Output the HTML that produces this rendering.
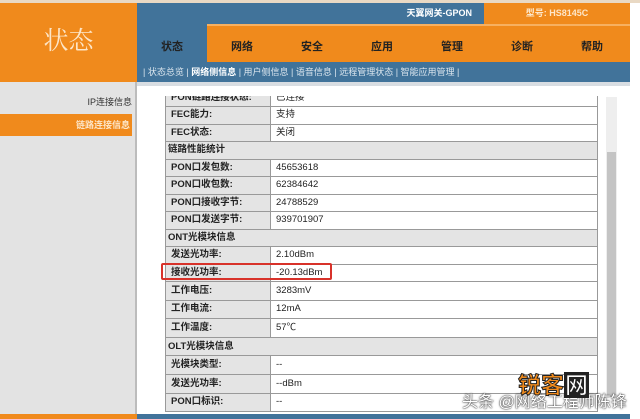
<!DOCTYPE html><html><head><meta charset="utf-8"><style>
body{margin:0;width:640px;height:419px;overflow:hidden;background:#fff;position:relative;font-family:"Liberation Sans","Noto Sans CJK SC",sans-serif;}
div{position:absolute;box-sizing:border-box}
.t{font-size:11px;font-weight:bold;color:#222;text-align:center;width:70px;top:38px}
table{border-collapse:collapse;font-size:9.5px;}
td{border:1px solid #999;height:17.5px;padding:0 0 0 5px;box-sizing:border-box;color:#222;line-height:10px}
tr.b td{height:18.6px}
td.k{background:#e4e4e4;font-weight:bold;width:105px}
td.s{background:#e4e4e4;font-weight:bold;padding-left:2px}
</style></head><body>
<div style="left:0;top:0;width:640px;height:3px;background:#e9d9c4"></div>
<div style="left:0;top:3px;width:137px;height:79px;background:#f08a1c;color:#fde6c8;font-size:25px;text-align:center;line-height:72px;font-family:'Noto Serif CJK SC',serif">状态</div>
<div style="left:137px;top:3px;width:347px;height:21px;background:#41739a;color:#fff;font-size:9px;font-weight:bold;text-align:right;padding-right:12px;line-height:21px">天翼网关-GPON</div>
<div style="left:484px;top:3px;width:146px;height:21px;background:#f08a1c;color:#fde6c8;font-size:9px;font-weight:bold;text-align:center;line-height:21px">型号: HS8145C</div>
<div style="left:137px;top:24px;width:493px;height:38px;background:#f08a1c;border-top:2px solid #f7b060"></div>
<div style="left:137px;top:24px;width:70px;height:38px;background:#41739a"></div>
<div class="t" style="left:137px">状态</div><div class="t" style="left:207px">网络</div><div class="t" style="left:277px">安全</div><div class="t" style="left:347px">应用</div><div class="t" style="left:417px">管理</div><div class="t" style="left:487px">诊断</div><div class="t" style="left:557px">帮助</div>
<div style="left:137px;top:62px;width:493px;height:20px;background:#41739a;color:#dbe6ee;font-size:9px;line-height:20px;padding-left:6px;white-space:nowrap">| 状态总览 | <b style="color:#fff">网络侧信息</b> | 用户侧信息 | 语音信息 | 远程管理状态 | 智能应用管理 |</div>
<div style="left:137px;top:82px;width:493px;height:4px;background:#d8dde2"></div>
<div style="left:0;top:82px;width:137px;height:332px;background:#e3e3e3;border-right:2px solid #bcbcbc"></div>
<div style="left:0;top:95px;width:132px;font-size:9px;text-align:right;color:#333">IP连接信息</div>
<div style="left:0;top:114px;width:132px;height:22px;background:#f08a1c;color:#fde6c8;font-size:9px;font-weight:bold;text-align:right;padding-right:2px;line-height:22px">链路连接信息</div>
<div style="left:0;top:414px;width:137px;height:5px;background:#f08a1c"></div>
<div style="left:137px;top:414px;width:493px;height:5px;background:#41739a"></div>
<div style="left:165px;top:96px;width:433px;height:317px;overflow:hidden">
<table style="width:433px;margin-top:-7.5px">
<tr><td class="k">PON链路连接状态:</td><td>已连接</td></tr>
<tr><td class="k">FEC能力:</td><td>支持</td></tr>
<tr><td class="k">FEC状态:</td><td>关闭</td></tr>
<tr><td class="s" colspan="2">链路性能统计</td></tr>
<tr><td class="k">PON口发包数:</td><td>45653618</td></tr>
<tr><td class="k">PON口收包数:</td><td>62384642</td></tr>
<tr><td class="k">PON口接收字节:</td><td>24788529</td></tr>
<tr><td class="k">PON口发送字节:</td><td>939701907</td></tr>
<tr><td class="s" colspan="2">ONT光模块信息</td></tr>
<tr><td class="k">发送光功率:</td><td>2.10dBm</td></tr>
<tr><td class="k">接收光功率:</td><td>-20.13dBm</td></tr>
<tr class="b"><td class="k">工作电压:</td><td>3283mV</td></tr>
<tr class="b"><td class="k">工作电流:</td><td>12mA</td></tr>
<tr class="b"><td class="k">工作温度:</td><td>57℃</td></tr>
<tr class="b"><td class="s" colspan="2">OLT光模块信息</td></tr>
<tr class="b"><td class="k">光模块类型:</td><td>--</td></tr>
<tr class="b"><td class="k">发送光功率:</td><td>--dBm</td></tr>
<tr class="b"><td class="k">PON口标识:</td><td>--</td></tr>
</table></div>
<div style="left:161px;top:263px;width:171px;height:17px;border:2px solid #d8322a;border-radius:2px"></div>
<div style="left:606px;top:97px;width:11px;height:300px;background:#eee"></div>
<div style="left:607px;top:152px;width:9px;height:245px;background:#c4c4c4"></div>
<div style="left:462px;top:388px;font-size:16px;color:#fff;text-shadow:0 0 2px #333,0 0 1px #000;white-space:nowrap">头条 @网络工程师陈锋</div>
<div style="left:518px;top:366px;font-size:23px;font-weight:bold;color:#f08a1c;-webkit-text-stroke:1px #222;white-space:nowrap">锐客<span style="color:#fff;background:#222;padding:0 1px">网</span></div>
</body></html>
